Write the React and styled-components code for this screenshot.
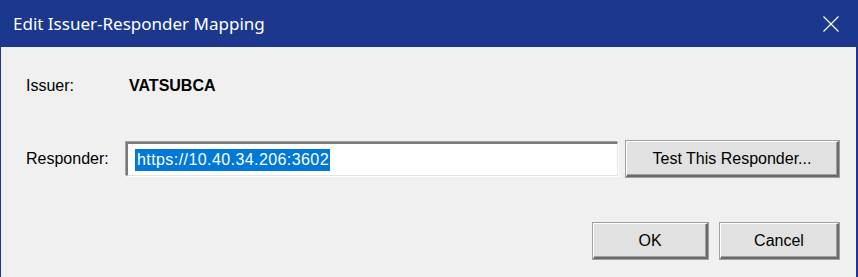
import React from "react";
import styled, { createGlobalStyle } from "styled-components";

const Global = createGlobalStyle`
  html, body { margin: 0; padding: 0; background: #f0f0f0; }
  body { width: 858px; height: 277px; overflow: hidden; }
`;

const Window = styled.div`
  box-sizing: border-box;
  width: 858px;
  height: 277px;
  display: flex;
  flex-direction: column;
  background: #f0f0f0;
  border-left: 1px solid #1b388e;
  border-right: 2px solid #1b388e;
  font-family: "Liberation Sans", Arial, sans-serif;
  font-size: 16px;
  color: #000;
`;

const TitleBar = styled.div`
  height: 47px;
  flex: none;
  display: flex;
  align-items: center;
  justify-content: space-between;
  background: #1b388e;
  color: #fff;
  padding: 0 17px 0 12px;
`;

const Title = styled.div`
  font-family: "Noto Sans", "Open Sans", sans-serif;
  font-size: 17px;
  padding-bottom: 1px;
`;

const Close = styled.div`
  width: 16px;
  height: 16px;
  display: flex;
`;

const Body = styled.div`
  flex: 1;
  display: flex;
  flex-direction: column;
  padding: 27px 17px 0 25px;
`;

const Row = styled.div`
  display: flex;
  align-items: center;
  height: ${p => p.h}px;
  margin-top: ${p => p.mt || 0}px;
`;

const Label = styled.div`
  width: 100px;
  flex: none;
`;

const Value = styled.div`
  font-weight: bold;
  padding-left: 3px;
`;

const Input = styled.div`
  box-sizing: border-box;
  width: 492px;
  height: 34px;
  background: #fff;
  border-top: 2px solid #7a7a7a;
  border-left: 2px solid #7a7a7a;
  border-bottom: 1px solid #e3e3e3;
  border-right: 1px solid #e3e3e3;
  box-shadow: -1px -1px 0 #a0a0a0, 1px 1px 0 #fff;
  display: flex;
  align-items: center;
  padding-left: 7px;
`;

const Selected = styled.span`
  background: #0078d7;
  color: #fff;
  padding: 1px 1px 2px 2px;
  line-height: 19px;
  letter-spacing: 0.42px;
`;

const Button = styled.button`
  box-sizing: border-box;
  width: ${p => p.w}px;
  height: ${p => p.hgt || 36}px;
  margin-left: ${p => p.ml || 0}px;
  background: #e1e1e1;
  border: none;
  border-top: 1px solid #fff;
  border-left: 1px solid #fff;
  border-right: 2px solid #696969;
  border-bottom: 2px solid #696969;
  box-shadow: inset -1px -1px 0 #a0a0a0, 0 0 0 1px #a0a0a0;
  font-family: "Liberation Sans", Arial, sans-serif;
  font-size: 16px;
  color: #000;
  padding: 0;
  flex: none;
`;

const Actions = styled.div`
  display: flex;
  justify-content: flex-end;
  margin-top: 46px;
`;

export default function App() {
  return (
    <>
      <Global />
      <Window>
        <TitleBar>
          <Title>Edit Issuer-Responder Mapping</Title>
          <Close>
            <svg width="16" height="16" viewBox="0 0 16 16">
              <path d="M0.5 0.5L15.5 15.5M15.5 0.5L0.5 15.5" stroke="#fff" strokeWidth="1.2" fill="none" />
            </svg>
          </Close>
        </TitleBar>
        <Body>
          <Row h={24}>
            <Label>Issuer:</Label>
            <Value>VATSUBCA</Value>
          </Row>
          <Row h={36} mt={43}>
            <Label>Responder:</Label>
            <Input>
              <Selected>https://10.40.34.206:3602</Selected>
            </Input>
            <Button w={213} ml={8}>Test This Responder...</Button>
          </Row>
          <Actions>
            <Button w={115}>OK</Button>
            <Button w={119} ml={12}>Cancel</Button>
          </Actions>
        </Body>
      </Window>
    </>
  );
}
